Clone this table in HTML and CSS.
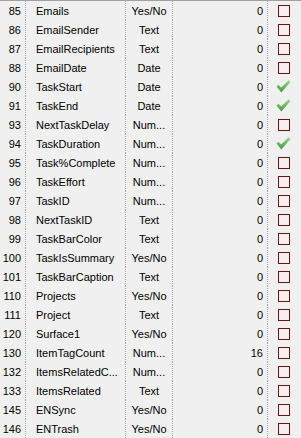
FILE: index.html
```html
<!DOCTYPE html>
<html>
<head>
<meta charset="utf-8">
<link rel="stylesheet" href="styles.css">
</head>
<body>
<div class="grid">
  <div class="row"><div class="c id">85</div><div class="c name">Emails</div><div class="c type">Yes/No</div><div class="c num">0</div><div class="c chk"><span class="box"></span></div></div>
  <div class="row"><div class="c id">86</div><div class="c name">EmailSender</div><div class="c type">Text</div><div class="c num">0</div><div class="c chk"><span class="box"></span></div></div>
  <div class="row"><div class="c id">87</div><div class="c name">EmailRecipients</div><div class="c type">Text</div><div class="c num">0</div><div class="c chk"><span class="box"></span></div></div>
  <div class="row"><div class="c id">88</div><div class="c name">EmailDate</div><div class="c type">Date</div><div class="c num">0</div><div class="c chk"><span class="box"></span></div></div>
  <div class="row"><div class="c id">90</div><div class="c name">TaskStart</div><div class="c type">Date</div><div class="c num">0</div><div class="c chk on"><svg class="tick" width="15" height="13" viewBox="0 0 15 13"><defs><linearGradient id="g1" x1="0" y1="0" x2="0" y2="1"><stop offset="0" stop-color="#9ad888"/><stop offset="1" stop-color="#3f9a3a"/></linearGradient></defs><path d="M0.5 6.5 L2.5 4.8 L5.2 7.4 L12.6 0.3 L14.5 2 L5.3 12.5 Z" fill="url(#g1)"/></svg></div></div>
  <div class="row"><div class="c id">91</div><div class="c name">TaskEnd</div><div class="c type">Date</div><div class="c num">0</div><div class="c chk on"><svg class="tick" width="15" height="13" viewBox="0 0 15 13"><defs><linearGradient id="g2" x1="0" y1="0" x2="0" y2="1"><stop offset="0" stop-color="#9ad888"/><stop offset="1" stop-color="#3f9a3a"/></linearGradient></defs><path d="M0.5 6.5 L2.5 4.8 L5.2 7.4 L12.6 0.3 L14.5 2 L5.3 12.5 Z" fill="url(#g2)"/></svg></div></div>
  <div class="row"><div class="c id">93</div><div class="c name">NextTaskDelay</div><div class="c type">Num...</div><div class="c num">0</div><div class="c chk"><span class="box"></span></div></div>
  <div class="row"><div class="c id">94</div><div class="c name">TaskDuration</div><div class="c type">Num...</div><div class="c num">0</div><div class="c chk on"><svg class="tick" width="15" height="13" viewBox="0 0 15 13"><defs><linearGradient id="g3" x1="0" y1="0" x2="0" y2="1"><stop offset="0" stop-color="#9ad888"/><stop offset="1" stop-color="#3f9a3a"/></linearGradient></defs><path d="M0.5 6.5 L2.5 4.8 L5.2 7.4 L12.6 0.3 L14.5 2 L5.3 12.5 Z" fill="url(#g3)"/></svg></div></div>
  <div class="row"><div class="c id">95</div><div class="c name">Task%Complete</div><div class="c type">Num...</div><div class="c num">0</div><div class="c chk"><span class="box"></span></div></div>
  <div class="row"><div class="c id">96</div><div class="c name">TaskEffort</div><div class="c type">Num...</div><div class="c num">0</div><div class="c chk"><span class="box"></span></div></div>
  <div class="row"><div class="c id">97</div><div class="c name">TaskID</div><div class="c type">Num...</div><div class="c num">0</div><div class="c chk"><span class="box"></span></div></div>
  <div class="row"><div class="c id">98</div><div class="c name">NextTaskID</div><div class="c type">Text</div><div class="c num">0</div><div class="c chk"><span class="box"></span></div></div>
  <div class="row"><div class="c id">99</div><div class="c name">TaskBarColor</div><div class="c type">Text</div><div class="c num">0</div><div class="c chk"><span class="box"></span></div></div>
  <div class="row"><div class="c id">100</div><div class="c name">TaskIsSummary</div><div class="c type">Yes/No</div><div class="c num">0</div><div class="c chk"><span class="box"></span></div></div>
  <div class="row"><div class="c id">101</div><div class="c name">TaskBarCaption</div><div class="c type">Text</div><div class="c num">0</div><div class="c chk"><span class="box"></span></div></div>
  <div class="row"><div class="c id">110</div><div class="c name">Projects</div><div class="c type">Yes/No</div><div class="c num">0</div><div class="c chk"><span class="box"></span></div></div>
  <div class="row"><div class="c id">111</div><div class="c name">Project</div><div class="c type">Text</div><div class="c num">0</div><div class="c chk"><span class="box"></span></div></div>
  <div class="row"><div class="c id">120</div><div class="c name">Surface1</div><div class="c type">Yes/No</div><div class="c num">0</div><div class="c chk"><span class="box"></span></div></div>
  <div class="row"><div class="c id">130</div><div class="c name">ItemTagCount</div><div class="c type">Num...</div><div class="c num">16</div><div class="c chk"><span class="box"></span></div></div>
  <div class="row"><div class="c id">132</div><div class="c name">ItemsRelatedC...</div><div class="c type">Num...</div><div class="c num">0</div><div class="c chk"><span class="box"></span></div></div>
  <div class="row"><div class="c id">133</div><div class="c name">ItemsRelated</div><div class="c type">Text</div><div class="c num">0</div><div class="c chk"><span class="box"></span></div></div>
  <div class="row"><div class="c id">145</div><div class="c name">ENSync</div><div class="c type">Yes/No</div><div class="c num">0</div><div class="c chk"><span class="box"></span></div></div>
  <div class="row"><div class="c id">146</div><div class="c name">ENTrash</div><div class="c type">Yes/No</div><div class="c num">0</div><div class="c chk"><span class="box"></span></div></div>
</div>
</body>
</html>
```
FILE: styles.css
```css
html, body {
  margin: 0;
  padding: 0;
  background: #f0f0f0;
}
body {
  font-family: "Liberation Sans", Arial, sans-serif;
  font-size: 11px;
  color: #000;
}
.grid {
  width: 301px;
  height: 438px;
  border-top: 1px solid #a0a0a0;
  box-sizing: border-box;
  overflow: hidden;
}
.row {
  display: grid;
  grid-template-columns: 26px 100px 47px 95px 1fr;
  height: 19px;
}
.c {
  display: flex;
  align-items: center;
  border-right: 1px dotted #a8a8a8;
  white-space: nowrap;
  overflow: hidden;
}
.id {
  justify-content: flex-end;
  padding-right: 4px;
}
.name {
  padding-left: 10px;
}
.type {
  justify-content: center;
}
.num {
  justify-content: flex-end;
  padding-right: 4px;
}
.chk {
  border-right: none;
  padding-left: 10px;
}
.chk.on {
  padding-left: 8px;
}
.box {
  width: 10px;
  height: 10px;
  border: 1px solid #6e1212;
  background: #f7efef;
}
.tick {
  display: block;
}
```
